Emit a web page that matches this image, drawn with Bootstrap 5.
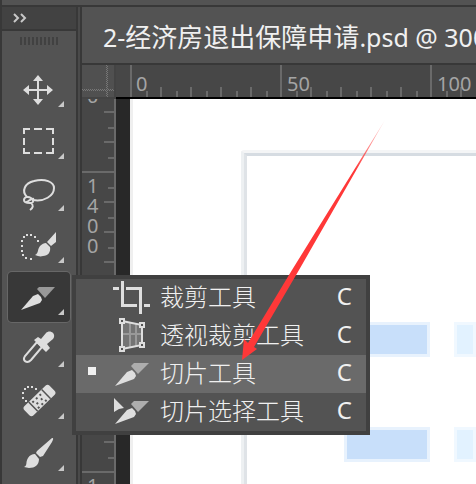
<!DOCTYPE html>
<html lang="zh-CN">
<head>
<meta charset="utf-8">
<meta name="viewport" content="width=device-width, initial-scale=1">
<title>2-经济房退出保障申请.psd</title>
<link href="https://cdn.jsdelivr.net/npm/bootstrap@5.3.0/dist/css/bootstrap.min.css" rel="stylesheet">
<style>
  body { background: #383838; color: #f0f0f0; font-family: "Noto Sans", "Noto Sans CJK SC", sans-serif; }
  .app-top { height: 5px; flex: none; margin-left: 2px; background: #535353; }
  .workspace { padding: 2px 0 0 2px; min-height: 0; }
  .toolbar { width: 74px; gap: 2px; }
  .toolbar-head { height: 22px; flex: none; background: #424242; }
  .toolbar-head svg { width: 14px; height: 10px; margin-left: 11px; }
  .toolbar-body { background: #535353; min-height: 0; }
  .grip { width: 38px; height: 8px; margin: 6px 0 19px 18px; background: repeating-linear-gradient(90deg, #414141 0 2px, #535353 2px 4px); }
  .tool-list { gap: 2px; padding: 0 6px; }
  .tool { height: 50px; flex: none; padding: 0; border: 0; border-radius: 4px; background: transparent; }
  .tool.active { background: #383838; box-shadow: 0 0 0 1px #676767; }
  .tool svg { display: block; width: 62px; height: 50px; }
  .splitter { width: 6px; background: linear-gradient(90deg, #383838 0 2px, #4a4a4a 2px 4px, #383838 4px); }
  .doc { min-width: 0; min-height: 0; }
  .doc-tab { height: 56px; flex: none; margin-bottom: 2px; padding-left: 21px; background: #535353; font-size: 26px; line-height: 58px; white-space: nowrap; overflow: hidden; font-family: "Noto Sans CJK SC", sans-serif; }
  .doc-tab .latin { font-family: "Noto Sans", sans-serif; font-size: 25px; }
  .ruler-corner { width: 34px; height: 34px; background: #505050; border-right: 2px solid #444; border-bottom: 2px solid #444; flex: none; }
  .ruler-x, .ruler-y { background: #474747; overflow: hidden; }
  .ruler-x { height: 34px; border-bottom: 2px solid #000; }
  .ruler-y { width: 34px; border-right: 2px solid #6a6a6a; flex: none; }
  .ruler-x svg, .ruler-y svg, .ruler-corner svg { display: block; }
  svg text { font-family: "Noto Sans", sans-serif; font-size: 20px; fill: #a4a4a4; }
  .stage { background: #282828; padding-left: 14px; min-width: 0; }
  .paper { background: #fff; border-left: 3px solid #efefef; padding: 51px 0 0 108px; overflow: hidden; }
  .form-frame { border-left: 3px solid #edf0f2; border-top: 3px solid #f4f5f6; border-top-left-radius: 3px; }
  .form-inner { border-left: 3px solid #dfe3e7; border-top: 3px solid #d6dce2; padding: 166px 0 0 97px; }
  .cell-row { gap: 24px; margin-bottom: 70px; }
  .cell { height: 35px; border: 3px solid #e8f2fd; }
  .cell-label { width: 86px; flex: none; background: #c8dffa; }
  .cell-value { background: #e2f2ff; border-color: #f0f8ff; }
  .tool-menu { left: 72px; top: 275px; width: 298px; border: 4px solid #404040; background: #535353; }
  .menu-line { height: 38px; border: 0; padding: 0 14px 0 0; background: transparent; color: #f0f0f0; font-size: 24px; line-height: 32px; text-align: left; }
  .menu-line.current { background: #6a6a6a; }
  .menu-line svg { width: 84px; height: 38px; flex: none; }
  .menu-name { font-family: "Noto Sans CJK SC", sans-serif; font-weight: 300; }
  .pointer { left: 230px; top: 115px; width: 160px; height: 250px; pointer-events: none; }
</style>
</head>
<body class="vh-100 overflow-hidden position-relative d-flex flex-column">
<div class="app-top"></div>
<div class="workspace d-flex flex-grow-1">
  <aside class="toolbar d-flex flex-column flex-shrink-0">
    <div class="toolbar-head d-flex align-items-center">
      <svg viewBox="0 0 14 10" fill="none" stroke="#c8c8c8" stroke-width="2" aria-hidden="true"><path d="M1 1l4 4-4 4M8 1l4 4-4 4"/></svg>
    </div>
    <div class="toolbar-body flex-grow-1 overflow-hidden">
      <div class="grip"></div>
      <div class="tool-list d-flex flex-column">
        <button class="tool" type="button" aria-label="移动工具"><svg viewBox="8 64 62 50" fill="#dedede"><path d="M37 80h2v9h9v2h-9v9h-2v-9h-9v-2h9z"/><path d="M38 75l5 6H33zM38 105l5-6H33zM23 90l6-5v10zM53 90l-6-5v10z"/><path fill="#c8c8c8" d="M64 101v6h-6z"/></svg></button>
        <button class="tool" type="button" aria-label="矩形选框工具"><svg viewBox="8 116 62 50"><path d="M24 134v-5h6M34 129h8M46 129h7v5M53 138v7M53 148v5h-7M42 153h-8M30 153h-6v-5M24 145v-7" fill="none" stroke="#dedede" stroke-width="2"/><path fill="#c8c8c8" d="M64 153v6h-6z"/></svg></button>
        <button class="tool" type="button" aria-label="套索工具"><svg viewBox="8 168 62 50" fill="none" stroke="#dedede" stroke-width="2"><path d="M27 197c-6-6-2-14 7-16 11-3 20 1 20 7 0 8-10 14-21 12"/><path d="M24 200c0-3 4-4 7-2s3 5-1 5-6-1-6-3zm2 2c3 0 4-4 8-3M31 203c3 2 2 5-1 7"/><path fill="#c8c8c8" stroke="none" d="M64 205v6h-6z"/></svg></button>
        <button class="tool" type="button" aria-label="快速选择工具"><svg viewBox="8 220 62 50" fill="#dedede"><path d="M26 234h2v2h-2zM30 234h2v2h-2zM34 236h2v2h-2zM23 236h2v2h-2zM37 240h2v2h-2zM21 240h2v2h-2zM21 245h2v2h-2zM21 250h2v2h-2zM22 254h2v2h-2zM25 257h2v2h-2zM30 258h2v2h-2z"/><path d="M56 232v10l-5 4-4-4zM46 243l4 4c1 5-2 9-7 9-3 1-5 0-8-1 4-2 2-5 5-9 2-2 4-3 6-3z"/><path fill="#c8c8c8" d="M64 257v6h-6z"/></svg></button>
        <button class="tool active" type="button" aria-label="切片工具" aria-pressed="true"><svg viewBox="8 272 62 50"><path fill="#989898" d="M37 289l2-2h16L45 298z"/><path fill="#dedede" d="M21 310l12-14 5-2 3 3 1 3-2 3z"/><path fill="#c8c8c8" d="M64 309v6h-6z"/></svg></button>
        <button class="tool" type="button" aria-label="吸管工具"><svg viewBox="8 324 62 50"><path d="M37 342l5 5-11 13c-4 4-9 1-6-4z" fill="none" stroke="#dedede" stroke-width="2"/><path fill="#dedede" d="M34 340l4-3 3 2 5-6c2-2 5-2 7 0s1 5 0 6l-6 5 3 4-4 4z"/><path fill="#c8c8c8" d="M64 361v6h-6z"/></svg></button>
        <button class="tool" type="button" aria-label="污点修复画笔工具"><svg viewBox="8 376 62 50" fill="#dedede"><path d="M27 386h2v2h-2zM31 386h2v2h-2zM35 388h2v2h-2zM24 388h2v2h-2zM22 392h2v2h-2zM22 397h2v2h-2zM25 400h2v2h-2z"/><g transform="rotate(-44 39.500 400.500)"><rect x="22" y="394" width="35" height="13" rx="3"/><path fill="#535353" d="M30 394h1.500v13H30zM48 394h1.500v13H48zM33 396h2v2h-2zM38 396h2v2h-2zM43 396h2v2h-2zM35 400h2v2h-2zM41 400h2v2h-2zM33 404h2v2h-2zM38 404h2v2h-2zM43 404h2v2h-2z"/></g><path fill="#c8c8c8" d="M64 413v6h-6z"/></svg></button>
        <button class="tool" type="button" aria-label="画笔工具"><svg viewBox="8 428 62 50" fill="#dedede"><path d="M52 438c2 0 1 2 0 4l-9 14-3 1-4-4 1-2zM35 454l4 5c0 6-4 9-10 9l-5-1c4-2 1-4 4-9 2-3 4-4 7-4z"/><path fill="#c8c8c8" d="M64 465v6h-6z"/></svg></button>
      </div>
    </div>
  </aside>
  <div class="splitter flex-shrink-0"></div>
  <main class="doc d-flex flex-column flex-grow-1">
    <div class="doc-tab"><span class="latin">2-</span>经济房退出保障申请<span class="latin">.psd @ 300</span></div>
    <div class="d-flex flex-shrink-0">
      <div class="ruler-corner"><svg width="32" height="32"><path d="M24.500 0v32M0 24.500h32" stroke="#777" stroke-dasharray="1 1"/><path d="M25.500 1v31M1 25.500h31" stroke="#777" stroke-dasharray="1 1"/></svg></div>
      <div class="ruler-x flex-grow-1">
        <svg width="100%" height="32">
          <defs>
            <pattern id="ticks-x" x="14" width="30" height="32" patternUnits="userSpaceOnUse"><path fill="#6a6a6a" d="M0 22h2v10H0zM16 26h2v6h-2z"/></pattern>
            <pattern id="major-x" x="14" width="150" height="32" patternUnits="userSpaceOnUse"><path fill="#6a6a6a" d="M0 0h2v32H0z"/></pattern>
          </defs>
          <rect x="14" width="100%" height="32" fill="url(#ticks-x)"/><rect x="14" width="100%" height="32" fill="url(#major-x)"/>
          <text x="20" y="26">0</text><text x="171" y="26">50</text><text x="321" y="26">100</text>
        </svg>
      </div>
    </div>
    <div class="d-flex flex-grow-1 overflow-hidden">
      <div class="ruler-y">
        <svg width="32" height="600">
          <defs>
            <pattern id="ticks-y" y="12" width="32" height="30" patternUnits="userSpaceOnUse"><path fill="#6a6a6a" d="M22 0h10v2H22zM26 16h6v2h-6z"/></pattern>
            <pattern id="major-y" y="72" width="32" height="300" patternUnits="userSpaceOnUse"><path fill="#6a6a6a" d="M0 0h32v2H0z"/></pattern>
          </defs>
          <rect width="32" height="600" fill="url(#ticks-y)"/><rect width="32" height="600" fill="url(#major-y)"/>
          <text x="5" y="4">0</text>
          <text x="5" y="94">1</text><text x="5" y="114">4</text><text x="5" y="134">0</text><text x="5" y="154">0</text>
          <text x="5" y="394">1</text>
        </svg>
      </div>
      <div class="stage d-flex flex-grow-1">
        <div class="paper flex-grow-1">
          <div class="form-frame h-100"><div class="form-inner h-100">
            <div class="cell-row d-flex"><div class="cell cell-label"></div><div class="cell cell-value flex-grow-1"></div></div>
            <div class="cell-row d-flex"><div class="cell cell-label"></div><div class="cell cell-value flex-grow-1"></div></div>
          </div></div>
        </div>
      </div>
    </div>
  </main>
</div>

<div class="tool-menu position-absolute d-flex flex-column" role="menu">
  <button class="menu-line d-flex align-items-center" type="button" role="menuitem"><svg viewBox="76 279 84 38" fill="none" stroke="#dedede" stroke-width="3"><path d="M113 288.500h6M122.500 281v24.500H137M126 288.500h14.500V314M144 305.500h6"/></svg><span class="menu-name pb-1">裁剪工具</span><span class="ms-auto pb-1">C</span></button>
  <button class="menu-line d-flex align-items-center" type="button" role="menuitem"><svg viewBox="76 317 84 38"><path d="M122 321l20 4v20l-20 4z" fill="#747474"/><path d="M130 323v25M136 324v23M122 334h20" fill="none" stroke="#999" stroke-width="2"/><path d="M122 321l20 4v20l-20 4z" fill="none" stroke="#dedede" stroke-width="2"/><path d="M120 319h4v4h-4zM140 323h4v4h-4zM140 343h4v4h-4zM120 347h4v4h-4z" fill="#535353" stroke="#dedede" stroke-width="2"/></svg><span class="menu-name pb-1">透视裁剪工具</span><span class="ms-auto pb-1">C</span></button>
  <button class="menu-line current d-flex align-items-center" type="button" role="menuitem"><svg viewBox="76 355 84 38"><path fill="#f0f0f0" d="M88 367h8v8h-8z"/><path fill="#adadad" d="M131 366l3-3h15l-11 11z"/><path fill="#dedede" d="M115 386l12-14 5-2 3 3 1 3-2 3z"/></svg><span class="menu-name pb-1">切片工具</span><span class="ms-auto pb-1">C</span></button>
  <button class="menu-line d-flex align-items-center" type="button" role="menuitem"><svg viewBox="76 393 84 38"><path fill="#adadad" d="M131 404l3-3h15l-11 11z"/><path fill="#dedede" d="M115 424l12-14 5-2 3 3 1 3-2 3zM114 398l10 10-5 1-5 3z"/></svg><span class="menu-name pb-1">切片选择工具</span><span class="ms-auto pb-1">C</span></button>
</div>

<svg class="pointer position-absolute" viewBox="230 115 160 250" aria-hidden="true">
  <defs><linearGradient id="fade" gradientUnits="userSpaceOnUse" x1="385" y1="120" x2="355" y2="170"><stop offset="0" stop-color="#ff3838" stop-opacity=".15"/><stop offset="1" stop-color="#ff3838"/></linearGradient></defs>
  <path fill="url(#fade)" d="M385 120L299 270 254 347l3 2-15 11 2-21 4 4L292 270z"/>
</svg>
<script src="https://cdn.jsdelivr.net/npm/bootstrap@5.3.0/dist/js/bootstrap.bundle.min.js"></script>
</body>
</html>
